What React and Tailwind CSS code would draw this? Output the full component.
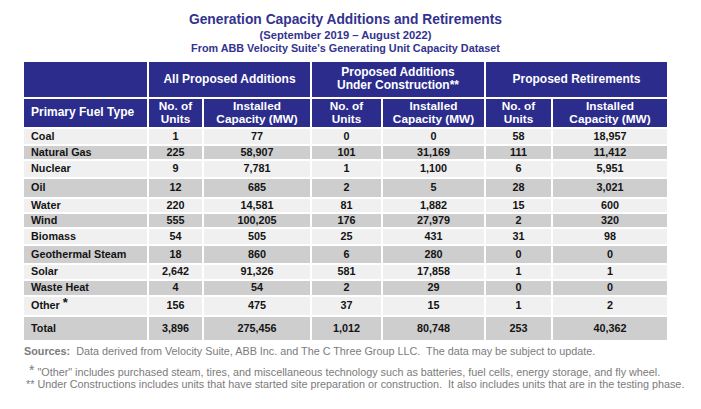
import React from 'react';

const rows = [
    { fuel: 'Coal', v: ['1', '77', '0', '0', '58', '18,957'] },
    { fuel: 'Natural Gas', v: ['225', '58,907', '101', '31,169', '111', '11,412'] },
    { fuel: 'Nuclear', v: ['9', '7,781', '1', '1,100', '6', '5,951'] },
    { fuel: 'Oil', v: ['12', '685', '2', '5', '28', '3,021'] },
    { fuel: 'Water', v: ['220', '14,581', '81', '1,882', '15', '600'] },
    { fuel: 'Wind', v: ['555', '100,205', '176', '27,979', '2', '320'] },
    { fuel: 'Biomass', v: ['54', '505', '25', '431', '31', '98'] },
    { fuel: 'Geothermal Steam', v: ['18', '860', '6', '280', '0', '0'] },
    { fuel: 'Solar', v: ['2,642', '91,326', '581', '17,858', '1', '1'] },
    { fuel: 'Waste Heat', v: ['4', '54', '2', '29', '0', '0'] },
    { fuel: 'Other', star: true, v: ['156', '475', '37', '15', '1', '2'] },
    { fuel: 'Total', v: ['3,896', '275,456', '1,012', '80,748', '253', '40,362'] },
];

const head = 'bg-[#2b2c8c] text-white font-bold flex items-center justify-center text-center';

const App = () => {
    return (
        <div className="w-[701px] h-[409px] bg-white overflow-hidden font-['Liberation_Sans',Arial,sans-serif]">
            {/* Title block */}
            <div className="pt-[13px] pl-[24px] w-[667px] flex flex-col items-center text-[#33338f] font-bold leading-none">
                <div className="text-[13.8px]">Generation Capacity Additions and Retirements</div>
                <div className="text-[11.2px] mt-[3px]">(September 2019 – August 2022)</div>
                <div className="text-[10.8px] mt-[2px]">From ABB Velocity Suite's Generating Unit Capacity Dataset</div>
            </div>

            <div className="ml-[24px] mt-[8px] grid gap-[2px] grid-cols-[123px_53px_106px_69px_101px_65px_114px] grid-rows-[35px_28px_15px_13px_16px_18px_13px_13px_15px_17px_14px_14px_18px_23px] text-[10.8px] leading-[11px]">
                <div className="bg-[#2b2c8c]" />
                <div className={`${head} col-span-2 text-[12px]`}>All Proposed Additions</div>
                <div className={`${head} col-span-2 text-[12px] leading-[13px]`}>Proposed Additions<br />Under Construction**</div>
                <div className={`${head} col-span-2 text-[12px]`}>Proposed Retirements</div>

                <div className={`${head} justify-start pl-[7px] text-[12px]`}>Primary Fuel Type</div>
                {[0, 1, 2].map((i) => (
                    <React.Fragment key={i}>
                        <div className={`${head} text-[11.8px] leading-[12.5px]`}>No. of<br />Units</div>
                        <div className={`${head} text-[11.8px] leading-[12.5px]`}>Installed<br />Capacity (MW)</div>
                    </React.Fragment>
                ))}

                {rows.map((r, idx) => {
                    const bg = idx % 2 === 0 ? 'bg-[#f0f0f0]' : 'bg-[#cecece]';
                    return (
                        <React.Fragment key={r.fuel}>
                            <div className={`${bg} flex items-center pl-[7px] font-bold text-[#141414]`}>
                                {r.fuel}
                                {r.star && <span className="ml-[3px] text-[13px] -mt-[6px]">*</span>}
                            </div>
                            {r.v.map((val, j) => (
                                <div key={j} className={`${bg} flex items-center justify-center font-bold text-[#141414]`}>{val}</div>
                            ))}
                        </React.Fragment>
                    );
                })}
            </div>

            {/* Footnotes */}
            <div className="pl-[24px] mt-[6px] text-[#7b7b7b] text-[10.8px] leading-none">
                <div><span className="font-bold">Sources:</span>&nbsp; Data derived from Velocity Suite, ABB Inc. and The C Three Group LLC.&nbsp; The data may be subject to update.</div>
                <div className="mt-[10px] pl-[5px] flex items-start">
                    <span className="text-[14px] leading-none mr-[3px] -mt-[4px]">*</span>
                    <span>"Other" includes purchased steam, tires, and miscellaneous technology such as batteries, fuel cells, energy storage, and fly wheel.</span>
                </div>
                <div className="mt-[2px] pl-[2px]">** Under Constructions includes units that have started site preparation or construction.&nbsp; It also includes units that are in the testing phase.</div>
            </div>
        </div>
    );
};

export default App;
